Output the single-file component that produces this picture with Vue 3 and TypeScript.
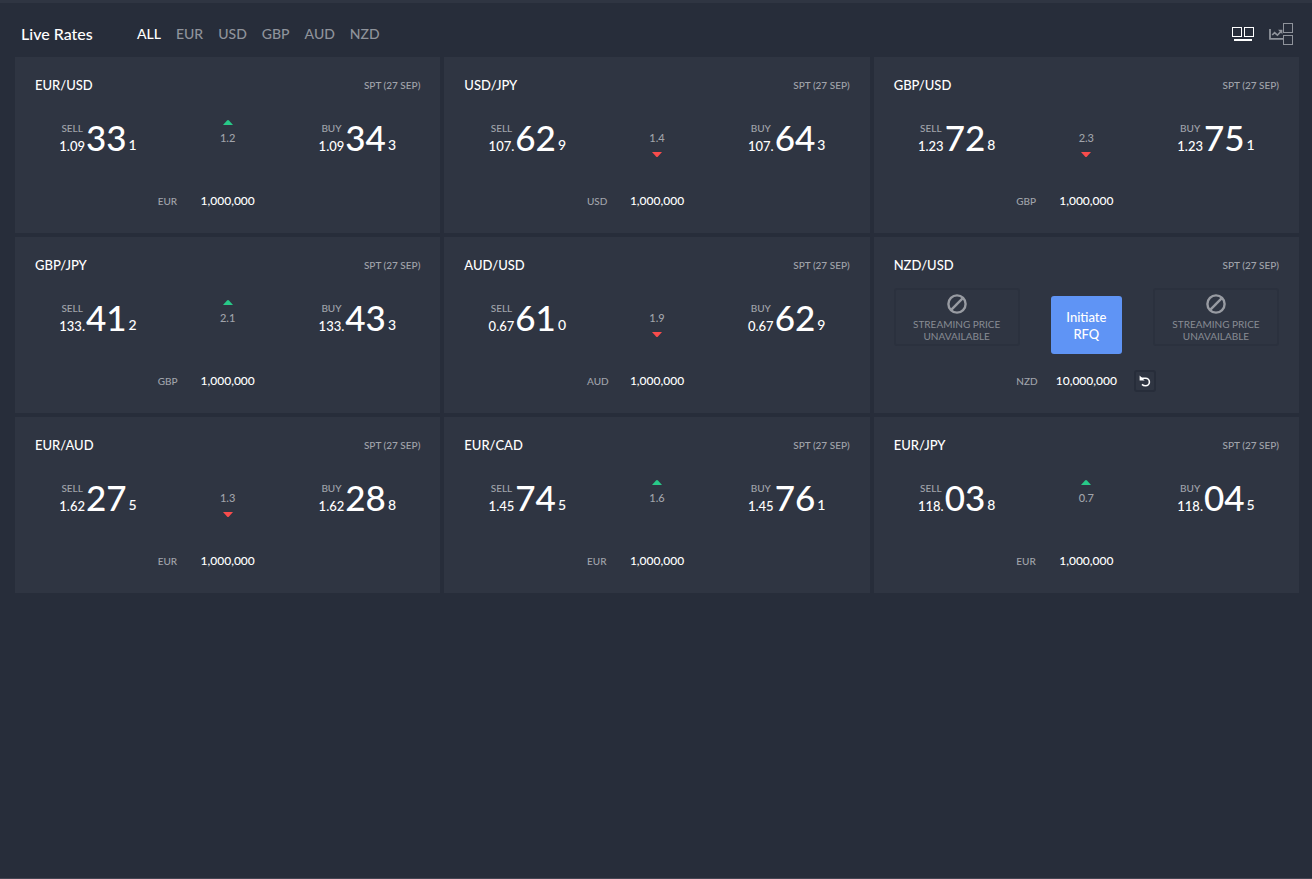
<script setup lang="ts">
import { ref } from 'vue'

type Direction = 'up' | 'down'

interface Rate {
  pair: string
  sell?: [string, string, string]
  buy?: [string, string, string]
  spread?: string
  direction?: Direction
  notional: string
}

const currencies = ['ALL', 'EUR', 'USD', 'GBP', 'AUD', 'NZD']
const selected = ref('ALL')
const valueDate = 'SPT (27 SEP)'

const rates = ref<Rate[]>([
  { pair: 'EUR/USD', sell: ['1.09', '33', '1'], buy: ['1.09', '34', '3'], spread: '1.2', direction: 'up', notional: '1,000,000' },
  { pair: 'USD/JPY', sell: ['107.', '62', '9'], buy: ['107.', '64', '3'], spread: '1.4', direction: 'down', notional: '1,000,000' },
  { pair: 'GBP/USD', sell: ['1.23', '72', '8'], buy: ['1.23', '75', '1'], spread: '2.3', direction: 'down', notional: '1,000,000' },
  { pair: 'GBP/JPY', sell: ['133.', '41', '2'], buy: ['133.', '43', '3'], spread: '2.1', direction: 'up', notional: '1,000,000' },
  { pair: 'AUD/USD', sell: ['0.67', '61', '0'], buy: ['0.67', '62', '9'], spread: '1.9', direction: 'down', notional: '1,000,000' },
  { pair: 'NZD/USD', notional: '10,000,000' },
  { pair: 'EUR/AUD', sell: ['1.62', '27', '5'], buy: ['1.62', '28', '8'], spread: '1.3', direction: 'down', notional: '1,000,000' },
  { pair: 'EUR/CAD', sell: ['1.45', '74', '5'], buy: ['1.45', '76', '1'], spread: '1.6', direction: 'up', notional: '1,000,000' },
  { pair: 'EUR/JPY', sell: ['118.', '03', '8'], buy: ['118.', '04', '5'], spread: '0.7', direction: 'up', notional: '1,000,000' },
])

const sides = ['sell', 'buy'] as const
const base = (pair: string): string => pair.slice(0, 3)
const inputId = (pair: string): string => 'notional-' + pair.replace('/', '-').toLowerCase()
</script>

<template>
  <main class="workspace">
    <header class="toolbar">
      <h1>Live Rates</h1>
      <nav class="filters" aria-label="Currency">
        <button
          v-for="c in currencies"
          :key="c"
          type="button"
          :class="{ active: c === selected }"
          @click="selected = c"
        >{{ c }}</button>
      </nav>
      <div class="views">
        <button type="button" class="view active" aria-label="Price tiles">
          <svg width="24" height="24" viewBox="0 0 24 24" fill="none" stroke="currentColor">
            <rect x="1.5" y="5.5" width="9" height="9" />
            <rect x="13.5" y="5.5" width="9" height="9" />
            <path d="M3 18h18" stroke-width="2" />
          </svg>
        </button>
        <button type="button" class="view" aria-label="Chart tiles">
          <svg width="24" height="24" viewBox="0 0 24 24" fill="none" stroke="currentColor">
            <rect x="14.5" y="1.5" width="9" height="9" />
            <rect x="14.5" y="13.5" width="9" height="9" />
            <path d="M1 7v9.8h13" stroke-width="1.8" />
            <path d="M3.2 13l2.4-2.4 2.8 2.6 3.4-3.6" stroke-width="1.6" />
            <path d="M9 7.8h4.4v4.4z" fill="currentColor" stroke="none" />
          </svg>
        </button>
      </div>
    </header>

    <section class="tiles" aria-label="Rates">
      <article v-for="rate in rates" :key="rate.pair" class="tile">
        <header class="tile-head">
          <h2>{{ rate.pair }}</h2>
          <span class="date">{{ valueDate }}</span>
        </header>

        <div class="quote">
          <template v-for="side in sides" :key="side">
            <button v-if="rate[side]" type="button" class="price" :class="side">
              <span class="lead">
                <span class="side">{{ side.toUpperCase() }}</span>
                <span class="prefix">{{ rate[side]![0] }}</span>
              </span>
              <span class="big">{{ rate[side]![1] }}</span>
              <span class="pip">{{ rate[side]![2] }}</span>
            </button>
            <div v-else class="unavailable" :class="side">
              <svg width="20" height="20" viewBox="0 0 20 20" fill="none" stroke="currentColor" stroke-width="2.4">
                <circle cx="10" cy="10" r="8.6" />
                <path d="M4.2 15.8L15.8 4.2" />
              </svg>
              <span>STREAMING PRICE UNAVAILABLE</span>
            </div>
          </template>

          <div v-if="rate.spread" class="movement">
            <svg :class="['up', { shown: rate.direction === 'up' }]" width="10" height="6" viewBox="0 0 10 6"><path d="M0 6L4 1.5Q5 .5 6 1.5L10 6z" /></svg>
            <span>{{ rate.spread }}</span>
            <svg :class="['down', { shown: rate.direction === 'down' }]" width="10" height="6" viewBox="0 0 10 6"><path d="M0 1L4 5.5Q5 6.5 6 5.5L10 1z" /></svg>
          </div>
          <button v-else type="button" class="rfq">Initiate RFQ</button>
        </div>

        <div class="notional">
          <label :for="inputId(rate.pair)">{{ base(rate.pair) }}</label>
          <input :id="inputId(rate.pair)" v-model="rate.notional" type="text" />
          <button v-if="!rate.sell" type="button" class="reset" aria-label="Reset notional">
            <svg width="12" height="12" viewBox="0 0 12 12" fill="none" stroke="currentColor">
              <path d="M2 3.2h4.6a3.8 3.8 0 0 1 0 7.6q-2.2 0-3.6-1.4" stroke-width="1.6" />
              <path d="M.6.6v5h5z" fill="currentColor" stroke="none" />
            </svg>
          </button>
        </div>
      </article>
    </section>
  </main>
</template>

<style>
body {
  background: #272d3a;
}
</style>

<style scoped>
.workspace {
  box-sizing: border-box;
  min-height: 100vh;
  padding: 0 13px 0 15px;
  border-top: 3px solid #2f3542;
  border-bottom: 1px solid #444552;
  background: #272d3a;
  color: #fff;
  font-family: Lato, "Liberation Sans", sans-serif;
  font-weight: 500;
}

button {
  margin: 0;
  padding: 0;
  border: 0;
  background: none;
  color: inherit;
  font: inherit;
  cursor: pointer;
}

svg {
  display: block;
}

.toolbar {
  display: flex;
  align-items: center;
  height: 54px;
  padding: 8px 6px 0 6px;
  box-sizing: border-box;
}

h1 {
  width: 116px;
  margin: 0;
  font-size: 16px;
  font-weight: 500;
  line-height: 20px;
}

.filters {
  display: flex;
  gap: 15px;
}

.filters button {
  color: #8f939b;
  font-size: 14px;
  line-height: 20px;
}

.filters .active {
  color: #fff;
}

.views {
  display: flex;
  gap: 14px;
  margin-left: auto;
}

.view {
  color: #8f939b;
}

.view.active {
  color: #fff;
}

.tiles {
  display: grid;
  grid-template-columns: repeat(3, 1fr);
  gap: 4px;
}

.tile {
  padding: 20px 20px 21px;
  background: #2f3542;
}

.tile-head {
  display: flex;
  align-items: center;
  justify-content: space-between;
  line-height: 16px;
}

h2 {
  margin: 0;
  font-size: 13px;
  font-weight: 500;
}

.date,
.side,
.notional label {
  color: #a1a4ab;
  font-size: 10px;
}

.quote {
  display: grid;
  grid-template-columns: 126px 1fr 126px;
  grid-template-rows: 66px;
  align-items: start;
  justify-items: center;
  margin: 15px 0 16px;
}

.quote > * {
  grid-row: 1;
}

.sell {
  grid-column: 1;
}

.buy {
  grid-column: 3;
}

.price {
  display: flex;
  align-items: center;
  height: 58px;
}

.lead {
  display: flex;
  flex-direction: column;
  align-items: center;
}

.side {
  line-height: 18px;
}

.prefix {
  font-size: 13px;
  line-height: 18px;
}

.big {
  margin: 0 2px 0 1px;
  font-size: 35px;
  line-height: 40px;
}

.pip {
  padding-top: 15px;
  font-size: 14px;
  line-height: 18px;
}

.movement {
  display: flex;
  grid-column: 2;
  flex-direction: column;
  align-items: center;
  justify-content: center;
  gap: 5px;
  height: 60px;
  color: #a1a4ab;
  font-size: 11px;
  line-height: 16px;
}

.movement svg {
  visibility: hidden;
}

.movement .shown {
  visibility: visible;
}

.up {
  fill: #28c988;
}

.down {
  fill: #f94c4c;
}

.unavailable {
  display: flex;
  flex-direction: column;
  align-items: center;
  gap: 4px;
  box-sizing: border-box;
  width: 100%;
  height: 58px;
  padding: 4px 12px 0;
  border: 2px solid #2b313e;
  border-radius: 3px;
  color: #888c94;
  font-size: 10px;
  font-weight: 400;
  line-height: 12px;
  text-align: center;
}

.unavailable svg {
  color: #989ba2;
}

.rfq {
  grid-column: 2;
  width: 71px;
  height: 58px;
  margin-top: 8px;
  padding: 2px 12px 0;
  border-radius: 3px;
  background: #5f94f5;
  font-size: 13px;
  line-height: 17px;
}

.notional {
  display: grid;
  grid-template-columns: 22px 96px 22px;
  align-items: center;
  justify-content: center;
  height: 22px;
}

.notional input {
  min-width: 0;
  padding: 0;
  border: 0;
  outline: 0;
  background: none;
  color: #fff;
  font-family: inherit;
  font-size: 12px;
  font-weight: 500;
  line-height: 18px;
  text-align: center;
}

.reset {
  display: grid;
  place-items: center;
  box-sizing: border-box;
  width: 22px;
  height: 22px;
  border: 2px solid #272d3a;
  border-radius: 3px;
}
</style>
